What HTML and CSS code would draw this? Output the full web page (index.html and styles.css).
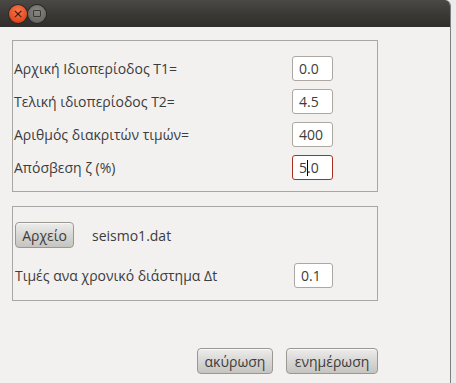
FILE: index.html
```html
<!DOCTYPE html>
<html lang="el">
<head>
	<meta charset="UTF-8">
	<title>Φάσμα απόκρισης</title>
	<link rel="stylesheet" href="styles.css">
</head>
<body>
	<div class="window">
		<!-- Title bar -->
		<div class="titlebar">
			<span class="win-btn close">&#215;</span>
			<span class="win-btn max"><span class="max-box"></span></span>
		</div>

		<div class="client">
			<!-- Period parameters -->
			<div class="panel params">
				<div class="row">
					<span class="label">Αρχική Ιδιοπερίοδος Τ1=</span>
					<div class="field">0.0</div>
				</div>
				<div class="row">
					<span class="label">Τελική ιδιοπερίοδος Τ2=</span>
					<div class="field">4.5</div>
				</div>
				<div class="row">
					<span class="label">Αριθμός διακριτών τιμών=</span>
					<div class="field">400</div>
				</div>
				<div class="row">
					<span class="label">Απόσβεση ζ (%)</span>
					<div class="field focused">5<span class="caret"></span>.0</div>
				</div>
			</div>

			<!-- Input file -->
			<div class="panel file">
				<div class="row file-row">
					<button class="btn">Αρχείο</button>
					<span class="file-name">seismo1.dat</span>
				</div>
				<div class="row">
					<span class="label dt-label">Τιμές ανα χρονικό διάστημα Δt</span>
					<div class="field dt">0.1</div>
				</div>
			</div>

			<!-- Dialog actions -->
			<div class="actions">
				<button class="btn cancel">ακύρωση</button>
				<button class="btn update">ενημέρωση</button>
			</div>
		</div>
	</div>
</body>
</html>
```

FILE: styles.css
```css
* {
	margin: 0;
	padding: 0;
	box-sizing: border-box;
}

body {
	width: 456px;
	height: 383px;
	overflow: hidden;
	background: linear-gradient(to right, #8c8c8c, #d0d0d0 60%, #ececec);
	font-family: 'Open Sans', 'DejaVu Sans', sans-serif;
	font-size: 14px;
	color: #3c3c3c;
}

/* Window frame */
.window {
	width: 451px;
	height: 383px;
	background: #f2f1f0;
	border-top-right-radius: 6px;
	border-right: 1px solid #7e7e7e;
	overflow: hidden;
}

.titlebar {
	height: 27px;
	background: linear-gradient(to bottom, #4a4945, #3c3b37 45%, #2f2e2a);
	display: flex;
	align-items: center;
	padding-left: 9px;
	gap: 1px;
}

.win-btn {
	width: 18px;
	height: 18px;
	border-radius: 50%;
	display: flex;
	align-items: center;
	justify-content: center;
}

.win-btn.close {
	background: radial-gradient(circle at 50% 35%, #f77a4e, #e1491d 70%, #b8360f);
	color: #3a1408;
	font-size: 13px;
	line-height: 1;
	font-family: 'DejaVu Sans', sans-serif;
	box-shadow: 0 0 0 1px #2a2925;
}

.win-btn.max {
	background: radial-gradient(circle at 50% 35%, #8a8984, #6a6964 70%, #55544f);
	box-shadow: 0 0 0 1px #2a2925;
}

.max-box {
	width: 8px;
	height: 7px;
	border: 1px solid #3b3a36;
	border-radius: 1px;
}

/* Content */
.client {
	padding: 13px 0 0 12px;
	display: flex;
	flex-direction: column;
	width: 378px;
}

.panel {
	border: 1px solid #a9a7a3;
	display: flex;
	flex-direction: column;
}

.params {
	padding: 15px 0 11px 1px;
	gap: 8px;
}

.file {
	margin-top: 14px;
	padding: 15px 0 12px 2px;
	gap: 15px;
}

.row {
	display: flex;
	align-items: center;
}

.label {
	width: 278px;
	white-space: nowrap;
}

.dt-label {
	width: 279px;
}

.field {
	width: 41px;
	height: 25px;
	background: #fff;
	border: 1px solid #aca8a1;
	border-radius: 3px;
	padding-left: 6px;
	display: flex;
	align-items: center;
	color: #3c3c3c;
}

.field.dt {
	width: 39px;
}

.field.focused {
	border-color: #a8301f;
}

.caret {
	width: 1px;
	height: 16px;
	background: #000;
	margin-right: -1px;
}

/* Buttons */
.btn {
	font-family: inherit;
	font-size: 14px;
	color: #3c3c3c;
	height: 26px;
	border: 1px solid #9a9893;
	border-radius: 4px;
	background: linear-gradient(to bottom, #ececeb, #d6d5d2 55%, #c5c4c0);
	box-shadow: inset 0 1px 0 #f8f8f8;
	padding: 0 2px;
}

.file-row .btn {
	width: 59px;
}

.file-name {
	margin-left: 18px;
}

.actions {
	margin-top: 47px;
	display: flex;
	justify-content: flex-end;
	gap: 13px;
}

.btn.cancel {
	width: 76px;
}

.btn.update {
	width: 92px;
}
```
